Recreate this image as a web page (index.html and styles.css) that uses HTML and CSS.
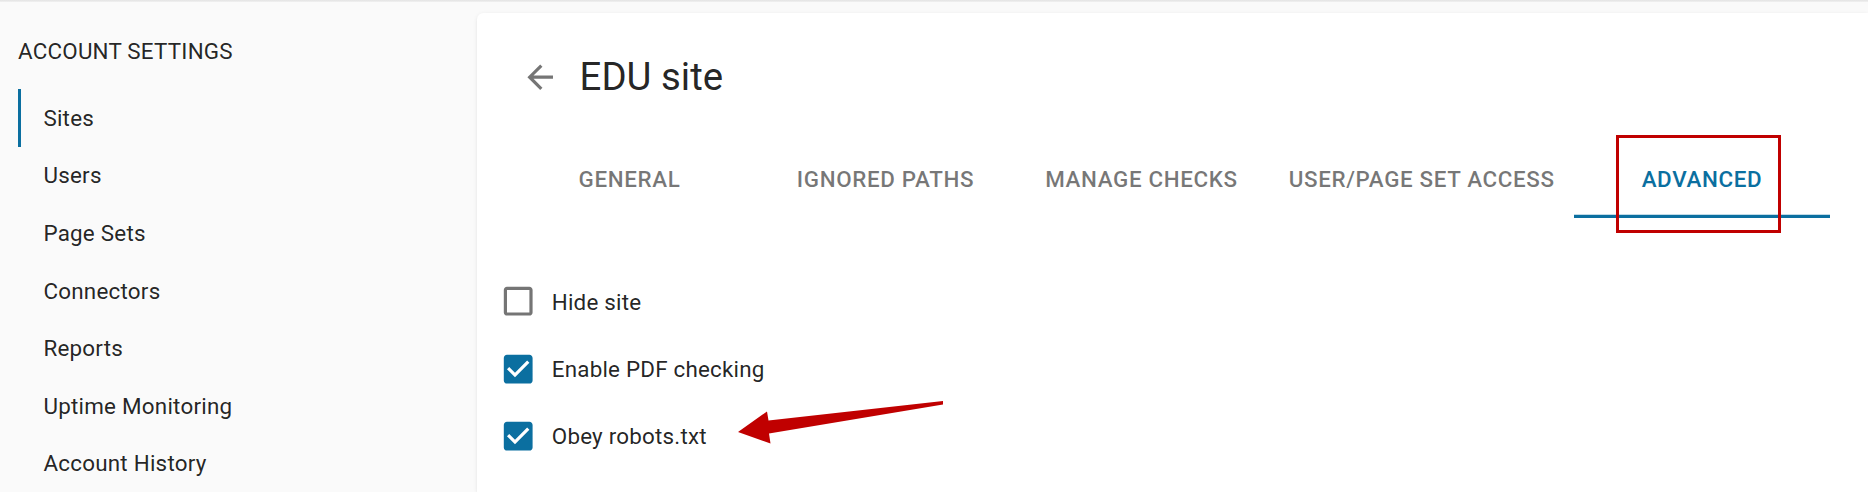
FILE: index.html
```html
<!DOCTYPE html>
<html lang="en">
<head>
<meta charset="utf-8">
<title>EDU site - Advanced</title>
<link rel="stylesheet" href="styles.css">
</head>
<body>
<div class="topline"></div>
<div class="layout">
  <aside class="sidebar">
    <h2 class="heading">ACCOUNT SETTINGS</h2>
    <nav class="nav">
      <div class="nav-item active">Sites</div>
      <div class="nav-item">Users</div>
      <div class="nav-item">Page Sets</div>
      <div class="nav-item">Connectors</div>
      <div class="nav-item">Reports</div>
      <div class="nav-item">Uptime Monitoring</div>
      <div class="nav-item">Account History</div>
    </nav>
  </aside>
  <main class="card">
    <div class="card-header">
      <svg class="back" viewBox="0 0 24 24"><path d="M20 11H7.83l5.59-5.59L12 4l-8 8 8 8 1.41-1.41L7.83 13H20v-2z"/></svg>
      <h1 class="title">EDU site</h1>
    </div>
    <div class="tabs">
      <div class="tab">General</div>
      <div class="tab">Ignored Paths</div>
      <div class="tab">Manage Checks</div>
      <div class="tab">User/Page Set Access</div>
      <div class="tab active">Advanced</div>
    </div>
    <div class="options">
      <label class="option">
        <svg class="cb" viewBox="0 0 24 24"><path d="M19 5v14H5V5h14m0-2H5c-1.1 0-2 .9-2 2v14c0 1.1.9 2 2 2h14c1.1 0 2-.9 2-2V5c0-1.1-.9-2-2-2z"/></svg>
        <span class="label">Hide site</span>
      </label>
      <label class="option">
        <svg class="cb checked" viewBox="0 0 24 24"><path d="M19 3H5c-1.11 0-2 .9-2 2v14c0 1.1.89 2 2 2h14c1.11 0 2-.9 2-2V5c0-1.1-.89-2-2-2zm-9 14l-5-5 1.41-1.41L10 14.17l7.590-7.59L19 8l-9 9z"/></svg>
        <span class="label">Enable PDF checking</span>
      </label>
      <label class="option">
        <svg class="cb checked" viewBox="0 0 24 24"><path d="M19 3H5c-1.11 0-2 .9-2 2v14c0 1.1.89 2 2 2h14c1.11 0 2-.9 2-2V5c0-1.1-.89-2-2-2zm-9 14l-5-5 1.41-1.41L10 14.17l7.59-7.59L19 8l-9 9z"/></svg>
        <span class="label">Obey robots.txt</span>
      </label>
    </div>
  </main>
</div>
<svg class="annotations" viewBox="0 0 1868 492" width="1868" height="492">
  <rect class="annot-box" x="1617.5" y="136.5" width="162" height="95"/>
  <polygon class="annot-arrow" points="738,432 767,411.5 768.5,420.5 943,401 943,404.5 769,433.5 770.5,443.5"/>
</svg>
</body>
</html>
```

FILE: styles.css
```css
html, body {
  margin: 0;
  padding: 0;
}

body {
  position: relative;
  width: 1868px;
  height: 492px;
  overflow: hidden;
  background: #fafafa;
  font-family: Roboto, "Liberation Sans", Arial, sans-serif;
  color: rgba(0, 0, 0, 0.87);
}

.topline {
  height: 2px;
  background: linear-gradient(#e3e3e3, #f1f1f1);
}

.layout {
  display: flex;
  align-items: flex-start;
}

.sidebar {
  flex: none;
  width: 476.7px;
  box-sizing: border-box;
  padding: 33px 0 0 18px;
}

.heading {
  margin: 0 0 20.4px;
  font-size: 22.4px;
  line-height: 33.6px;
  font-weight: 400;
  letter-spacing: 0.21px;
}

.nav {
  display: flex;
  flex-direction: column;
}

.nav-item {
  height: 57.6px;
  display: flex;
  align-items: center;
  box-sizing: border-box;
  padding-left: 22.4px;
  border-left: 3.2px solid transparent;
  font-size: 22.4px;
  letter-spacing: 0.24px;
}

.nav-item.active {
  border-left-color: #0b6fa0;
}

.card {
  flex: 1;
  margin-top: 11.3px;
  height: 478.7px;
  box-sizing: border-box;
  background: #fff;
  border-radius: 6.4px 0 0 0;
  box-shadow: 0 2px 1px -1px rgba(0, 0, 0, 0.12), 0 1px 1px 0 rgba(0, 0, 0, 0.08), 0 1px 4px 0 rgba(0, 0, 0, 0.08);
  padding-left: 24.8px;
}

.card-header {
  display: flex;
  align-items: center;
  height: 77px;
  margin-top: 25px;
  padding-left: 19.7px;
  gap: 20px;
}

.back {
  width: 38.4px;
  height: 38.4px;
  fill: rgba(0, 0, 0, 0.54);
  flex: none;
}

.title {
  margin: 0;
  font-size: 38.4px;
  font-weight: 400;
  line-height: 1.2;
  color: rgba(0, 0, 0, 0.87);
}

.tabs {
  display: flex;
  height: 76.8px;
  margin-top: 25.6px;
}

.tab {
  min-width: 256px;
  box-sizing: border-box;
  padding: 0 19.2px;
  display: flex;
  align-items: center;
  justify-content: center;
  font-size: 22.4px;
  font-weight: 500;
  letter-spacing: 0.64px;
  text-transform: uppercase;
  color: rgba(0, 0, 0, 0.54);
  white-space: nowrap;
}

.tab.active {
  color: #0b6fa0;
  box-shadow: inset 0 -3.2px 0 #0b6fa0;
}

.options {
  display: flex;
  flex-direction: column;
  margin-top: 50.4px;
}

.option {
  display: flex;
  align-items: center;
  height: 67.2px;
}

.cb {
  flex: none;
  width: 38.4px;
  height: 38.4px;
  margin-left: -2.5px;
  margin-right: 14.4px;
  fill: rgba(0, 0, 0, 0.54);
}

.cb.checked {
  fill: #0b6fa0;
}

.label {
  font-size: 22.4px;
  letter-spacing: 0.21px;
  color: rgba(0, 0, 0, 0.87);
}

.annotations {
  position: absolute;
  top: 0;
  left: 0;
  pointer-events: none;
}

.annot-box {
  fill: none;
  stroke: #c00000;
  stroke-width: 3;
}

.annot-arrow {
  fill: #c00000;
}
```
